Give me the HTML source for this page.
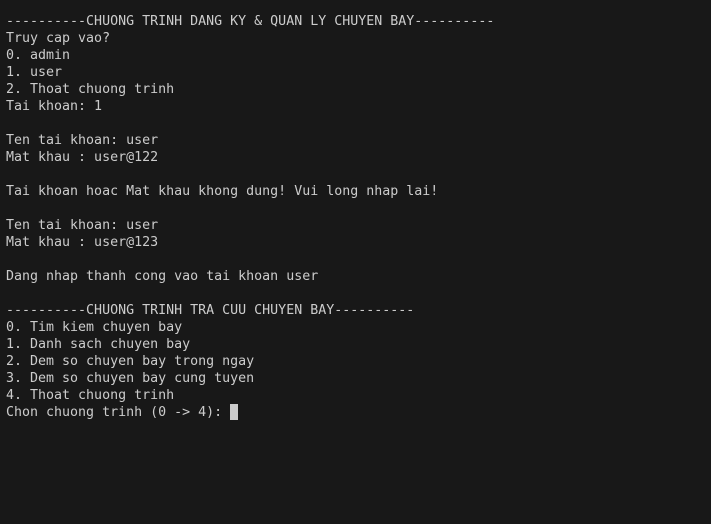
<!DOCTYPE html>
<html><head><style>
html,body{margin:0;padding:0;background:#181818;width:711px;height:524px;overflow:hidden}
pre{margin:0;padding:13px 0 0 6px;font-family:"DejaVu Sans Mono","Liberation Mono",monospace;font-size:13.3px;line-height:17px;color:#cccccc}
.c{display:inline-block;width:8px;height:16px;background:#cccccc;vertical-align:-4px}
</style></head><body><pre>----------CHUONG TRINH DANG KY &amp; QUAN LY CHUYEN BAY----------
Truy cap vao?
0. admin
1. user
2. Thoat chuong trinh
Tai khoan: 1

Ten tai khoan: user
Mat khau : user@122

Tai khoan hoac Mat khau khong dung! Vui long nhap lai!

Ten tai khoan: user
Mat khau : user@123

Dang nhap thanh cong vao tai khoan user

----------CHUONG TRINH TRA CUU CHUYEN BAY----------
0. Tim kiem chuyen bay
1. Danh sach chuyen bay
2. Dem so chuyen bay trong ngay
3. Dem so chuyen bay cung tuyen
4. Thoat chuong trinh
Chon chuong trinh (0 -&gt; 4): <span class="c"></span></pre></body></html>
